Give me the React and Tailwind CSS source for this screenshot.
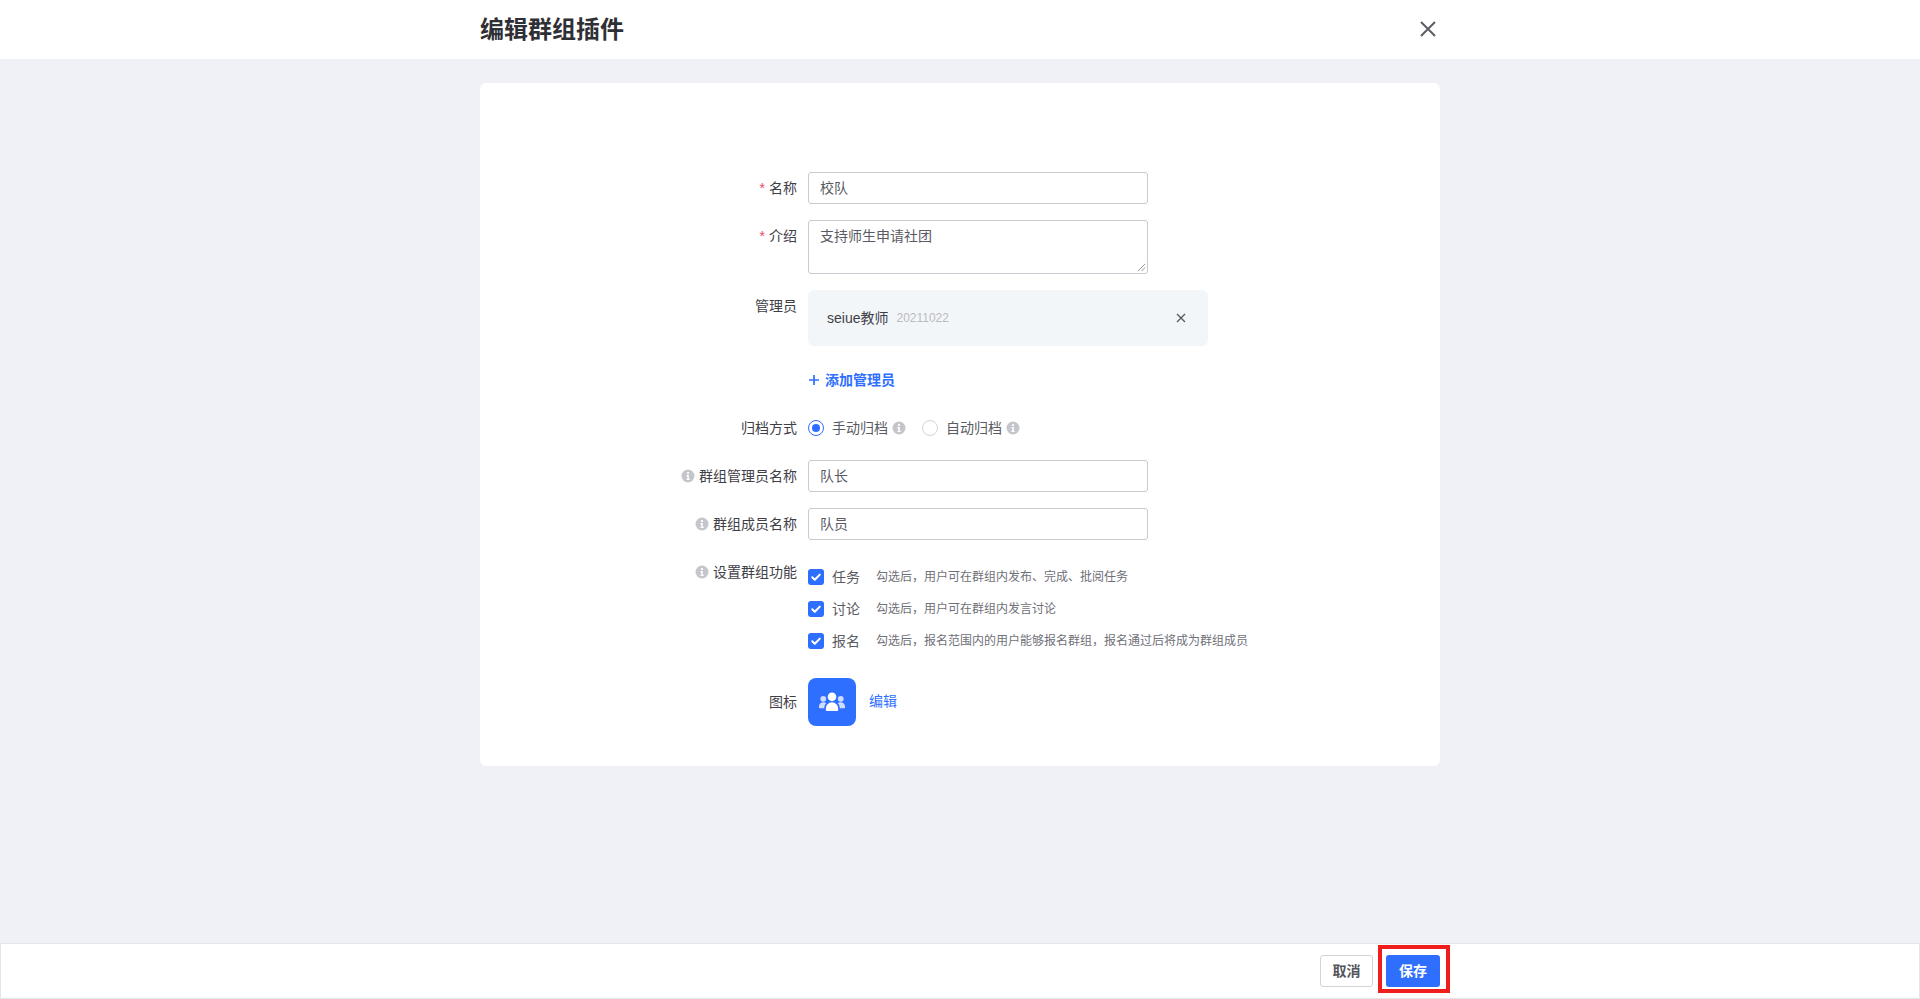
import React from "react";

const font = { fontFamily: '"Liberation Sans","Noto Sans CJK SC",sans-serif' };

function Info({ className = "" }) {
  return (
    <svg viewBox="0 0 14 14" className={`w-[14px] h-[14px] shrink-0 ${className}`}>
      <circle cx="7" cy="7" r="6.5" fill="#c4c6cc" />
      <rect x="6" y="3" width="2" height="2" rx="0.6" fill="#fff" />
      <path d="M5.4 6h2.4v3.800h.9V11H5.4V9.800h.9V7.200h-.9z" fill="#fff" />
    </svg>
  );
}

function Row({ label, req, info, top, className = "", children }) {
  return (
    <div className={`flex ${top ? "items-start" : "items-center"} ${className}`}>
      <div className={`w-[317px] shrink-0 flex items-center justify-end text-[14px] leading-5 text-[#3f4047] ${top ? "pt-[6px]" : ""}`}>
        {req && <span className="text-[#f5455b] mr-[4px] text-[14px] leading-5">*</span>}
        {info && <Info className="mr-[4px]" />}
        <span>{label}</span>
      </div>
      <div className="ml-[11px] flex-1 min-w-0">{children}</div>
    </div>
  );
}

function Input({ value }) {
  return (
    <div className="w-[340px] h-8 rounded-[3px] border border-[#c9cad2] bg-white px-[11px] flex items-center text-[14px] text-[#5a5b62]">
      {value}
    </div>
  );
}

function Check({ name, desc }) {
  return (
    <div className="flex items-center h-[32px]">
      <span className="w-[16px] h-[16px] rounded-[3px] bg-[#2f6fff] flex items-center justify-center shrink-0">
        <svg viewBox="0 0 16 16" className="w-[16px] h-[16px]">
          <path d="M4.200 8.200l2.600 2.600 5-5.200" fill="none" stroke="#fff" strokeWidth="2" strokeLinecap="round" strokeLinejoin="round" />
        </svg>
      </span>
      <span className="ml-[8px] w-[38px] text-[14px] text-[#5a5b62]">{name}</span>
      <span className="ml-[6px] text-[12px] text-[#6f7078]">{desc}</span>
    </div>
  );
}

export default function App() {
  return (
    <div style={font} className="h-screen flex flex-col bg-[#f0f1f6] overflow-hidden">
      <header className="h-[59px] shrink-0 bg-white flex justify-center">
        <div className="w-[960px] flex items-center justify-between">
          <h1 className="text-[24px] font-bold leading-[58px] text-[#2f3036]">编辑群组插件</h1>
          <svg viewBox="0 0 18 18" className="w-[18px] h-[18px] mr-[3px] -mt-[1px]">
            <path d="M2 2l14 14M16 2L2 16" stroke="#5d5e65" strokeWidth="2" fill="none" />
          </svg>
        </div>
      </header>

      <main className="flex-1 flex justify-center pt-[24px]">
        <div className="w-[960px] h-[683px] bg-white rounded-[6px] pt-[89px]">
          <Row label="名称" req>
            <Input value="校队" />
          </Row>
          <Row label="介绍" req top className="mt-4">
            <div className="w-[340px] h-[54px] rounded-[3px] border border-[#c9cad2] bg-white px-[11px] pt-[5px] text-[14px] leading-5 text-[#5a5b62] relative">
              支持师生申请社团
              <svg viewBox="0 0 10 10" className="absolute right-[1px] bottom-[1px] w-[9px] h-[9px]">
                <path d="M1 9l8-8M5 9l4-4" stroke="#8a8b91" strokeWidth="1" fill="none" />
              </svg>
            </div>
          </Row>
          <Row label="管理员" top className="mt-4">
            <div className="w-[400px] h-[56px] rounded-[6px] bg-[#f3f6f9] flex items-center pl-[19px] pr-[22px]">
              <span className="text-[14px] text-[#3f4047]">seiue教师</span>
              <span className="ml-[8px] text-[12px] text-[#b9bbc1]">20211022</span>
              <svg viewBox="0 0 10 10" className="ml-auto w-[10px] h-[10px]">
                <path d="M1 1l8 8M9 1l-8 8" stroke="#55565d" strokeWidth="1.300" fill="none" />
              </svg>
            </div>
            <div className="mt-[24px] h-5 flex items-center text-[14px] font-bold text-[#2f6fff]">
              <svg viewBox="0 0 12 12" className="w-[12px] h-[12px] mr-[5px]">
                <path d="M6 1v10M1 6h10" stroke="#2f6fff" strokeWidth="1.700" fill="none" />
              </svg>
              添加管理员
            </div>
          </Row>
          <Row label="归档方式" className="mt-[28px] h-5">
            <div className="flex items-center text-[14px] text-[#5a5b62]">
              <span className="w-4 h-4 rounded-full border border-[#2f6fff] flex items-center justify-center">
                <span className="w-2 h-2 rounded-full bg-[#2f6fff]" />
              </span>
              <span className="ml-[8px]">手动归档</span>
              <Info className="ml-[4px]" />
              <span className="ml-[16px] w-4 h-4 rounded-full border border-[#d3d4da] bg-white" />
              <span className="ml-[8px]">自动归档</span>
              <Info className="ml-[4px]" />
            </div>
          </Row>
          <Row label="群组管理员名称" info className="mt-[22px]">
            <Input value="队长" />
          </Row>
          <Row label="群组成员名称" info className="mt-4">
            <Input value="队员" />
          </Row>
          <Row label="设置群组功能" info top className="mt-4">
            <div className="mt-[5px]">
              <Check name="任务" desc="勾选后，用户可在群组内发布、完成、批阅任务" />
              <Check name="讨论" desc="勾选后，用户可在群组内发言讨论" />
              <Check name="报名" desc="勾选后，报名范围内的用户能够报名群组，报名通过后将成为群组成员" />
            </div>
          </Row>
          <Row label="图标" className="mt-[21px]">
            <div className="flex items-center">
              <div className="w-12 h-12 rounded-[8px] bg-[#2f6fff] flex items-center justify-center">
                <svg viewBox="0 0 24 24" className="w-[30px] h-[30px]">
                  <circle cx="5" cy="9.400" r="2.300" fill="#cfdcff" />
                  <circle cx="19" cy="9.400" r="2.300" fill="#cfdcff" />
                  <path d="M1.500 16c0-2.400 1.600-3.800 3.600-3.800 1 0 1.600.3 2.200.8-1 1-1.500 2.300-1.500 4H2.500c-.6 0-1-.4-1-1zM22.500 16c0-2.400-1.600-3.800-3.600-3.800-1 0-1.600.3-2.200.8 1 1 1.500 2.300 1.500 4h3.300c.6 0 1-.4 1-1z" fill="#cfdcff" />
                  <circle cx="12" cy="7.800" r="3.500" fill="#fff" />
                  <path d="M7 18c0-3.500 2.200-5.800 5-5.800s5 2.300 5 5.800c0 .8-.5 1.200-1.200 1.200H8.200C7.500 19.200 7 18.800 7 18z" fill="#fff" />
                </svg>
              </div>
              <span className="ml-[13px] -mt-[1px] text-[14px] text-[#2f6fff]">编辑</span>
            </div>
          </Row>
        </div>
      </main>

      <footer className="h-[56px] shrink-0 bg-white border border-[#e5e6ea] flex items-center justify-end pr-[479px]">
        <button className="w-[53px] h-8 rounded-[3px] border border-[#d3d4da] bg-white text-[14px] font-bold text-[#55565d]">取消</button>
        <div className="relative ml-[13px]">
          <button className="block w-[54px] h-8 rounded-[3px] bg-[#2f6fff] text-[14px] font-bold text-white">保存</button>
          <div className="absolute -left-[8px] -right-[10px] -top-[10px] -bottom-[6px] border-[4px] border-[#f01d1d]" />
        </div>
      </footer>
    </div>
  );
}
